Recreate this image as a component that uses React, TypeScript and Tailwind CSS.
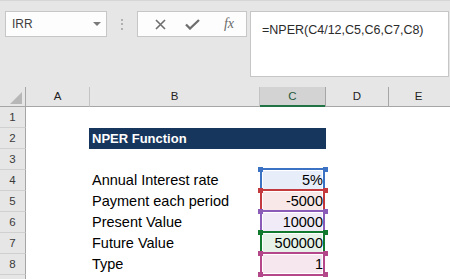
import React from "react";

const ranges = [
  { label: "Annual Interest rate", value: "5%", border: "border-[#3b72c4]", handle: "bg-[#3b72c4]", fill: "bg-[#e8eef9]" },
  { label: "Payment each period", value: "-5000", border: "border-[#c4393d]", handle: "bg-[#c4393d]", fill: "bg-[#f9e8e8]" },
  { label: "Present Value", value: "10000", border: "border-[#8a5cb8]", handle: "bg-[#8a5cb8]", fill: "bg-[#f0ebf6]" },
  { label: "Future Value", value: "500000", border: "border-[#127a2e]", handle: "bg-[#127a2e]", fill: "bg-[#e6f2e8]" },
  { label: "Type", value: "1", border: "border-[#b3478a]", handle: "bg-[#b3478a]", fill: "bg-[#f6e7ef]" },
];

function RowHead({ n }: { n?: number }) {
  return (
    <div className="h-[21px] border-r border-b border-r-[#a6a6a6] border-b-[#d0d0d0] bg-[#e6e6e6] flex items-center justify-center text-[11.5px] leading-[21px] text-[#3a3a3a]">
      {n}
    </div>
  );
}

export default function App() {
  return (
    <div
      className="w-[450px] h-[279px] overflow-hidden bg-[#e6e6e6] relative"
      style={{ fontFamily: '"Liberation Sans", Arial, sans-serif' }}
    >
      {/* Formula bar */}
      <div className="h-[87px] border-t border-[#d6d6d6] flex items-start pt-[10px]">
        <div className="ml-[5px] w-[102px] h-[26px] border border-[#c6c6c6] bg-[#fdfdfd] flex items-center justify-between pl-[6px] pr-[5px]">
          <span className="text-[12px] text-[#404040]">IRR</span>
          <svg width="8" height="4" viewBox="0 0 8 4">
            <polygon points="0,0 8,0 4,4" fill="#7a7a7a" />
          </svg>
        </div>
        <div className="w-[30px] h-[26px] flex flex-col items-center justify-center gap-[2.5px]">
          <div className="w-[2px] h-[2px] bg-[#b0b0b0]" />
          <div className="w-[2px] h-[2px] bg-[#b0b0b0]" />
          <div className="w-[2px] h-[2px] bg-[#b0b0b0]" />
        </div>
        <div className="w-[110px] h-[26px] border border-[#c6c6c6] bg-[#fdfdfd] flex items-center">
          <div className="w-[28px] flex justify-end">
            <svg width="11" height="11" viewBox="0 0 11 11">
              <path d="M1 1 L10 10 M10 1 L1 10" stroke="#6e6e6e" strokeWidth="1.6" fill="none" />
            </svg>
          </div>
          <div className="w-[34px] flex justify-end">
            <svg width="15" height="11" viewBox="0 0 15 11">
              <path d="M1 5.5 L5 9.5 L14 1" stroke="#6e6e6e" strokeWidth="2.3" fill="none" />
            </svg>
          </div>
          <div className="w-[34px] flex justify-end">
            <span className="italic text-[14px] text-[#6a6a6a] leading-none" style={{ fontFamily: '"Liberation Serif", "Times New Roman", serif' }}>
              fx
            </span>
          </div>
        </div>
        <div className="ml-[3px] mr-[1px] flex-1 h-[66px] border border-[#c6c6c6] bg-white pl-[11px] pt-[5px]">
          <span className="text-[12.5px] leading-[16px] text-[#2b2b2b]">=NPER(C4/12,C5,C6,C7,C8)</span>
        </div>
      </div>

      {/* Sheet */}
      <div className="grid grid-cols-[26px_64px_170px_66px_63px_1fr] bg-white">
        {/* Column headers */}
        <div className="h-[20px] bg-[#e6e6e6] border-r border-b border-r-[#a6a6a6] border-b-[#a6a6a6] flex items-end justify-end pr-[3px] pb-[2px]">
          <svg width="12" height="12" viewBox="0 0 12 12">
            <polygon points="12,0 12,12 0,12" fill="#b7b7b7" />
          </svg>
        </div>
        <div className="h-[20px] bg-[#e6e6e6] border-r border-b border-r-[#c4c4c4] border-b-[#a6a6a6] flex items-center justify-center text-[11.5px] text-[#222]">A</div>
        <div className="h-[20px] bg-[#e6e6e6] border-r border-b border-r-[#c4c4c4] border-b-[#a6a6a6] flex items-center justify-center text-[11.5px] text-[#222]">B</div>
        <div className="h-[20px] bg-[#d3d3d3] border-r border-l-0 border-r-[#a6a6a6] flex flex-col">
          <div className="flex-1 flex items-center justify-center text-[11.5px] text-[#1f5a3c] pt-[1px]">C</div>
          <div className="h-[3px] bg-[#217346]" />
        </div>
        <div className="h-[20px] bg-[#e6e6e6] border-r border-b border-r-[#a6a6a6] border-b-[#a6a6a6] flex items-center justify-center text-[11.5px] text-[#222]">D</div>
        <div className="h-[20px] bg-[#e6e6e6] border-b border-b-[#a6a6a6] flex items-center justify-center text-[11.5px] text-[#222] pr-[2px]">E</div>

        {/* Row 1 */}
        <RowHead n={1} />
        <div className="col-span-5 h-[21px]" />

        {/* Row 2 */}
        <RowHead n={2} />
        <div className="h-[21px]" />
        <div className="col-span-2 h-[21px] bg-[#17365d] -ml-[1px] pl-[3px] text-white font-bold text-[13px] leading-[21px]">
          NPER Function
        </div>
        <div className="col-span-2 h-[21px]" />

        {/* Row 3 */}
        <RowHead n={3} />
        <div className="col-span-5 h-[21px]" />

        {ranges.map((r, i) => (
          <React.Fragment key={i}>
            <RowHead n={i + 4} />
            <div className="h-[21px]" />
            <div className="h-[21px] pl-[2px] text-[14.5px] leading-[21px] text-black whitespace-nowrap">{r.label}</div>
            <div className="h-[21px] relative">
              <div className={`absolute -top-[2px] -bottom-[1px] left-0 right-[1px] border-2 ${r.border} p-[1px] bg-white`}>
                <div className={`w-full h-full ${r.fill}`} />
              </div>
              <div className={`absolute -top-[3px] -left-[2px] w-[5px] h-[5px] ${r.handle}`} />
              <div className={`absolute -top-[3px] right-[-2px] w-[5px] h-[5px] ${r.handle}`} />
              <div className={`absolute -bottom-[2px] -left-[2px] w-[5px] h-[5px] ${r.handle}`} />
              <div className={`absolute -bottom-[2px] right-[-2px] w-[5px] h-[5px] ${r.handle}`} />
              <div className="relative z-10 text-right pr-[3px] text-[14.5px] leading-[21px] text-black">{r.value}</div>
            </div>
            <div className="col-span-2 h-[21px]" />
          </React.Fragment>
        ))}

        <RowHead />
        <div className="col-span-5 h-[21px]" />
      </div>
    </div>
  );
}
